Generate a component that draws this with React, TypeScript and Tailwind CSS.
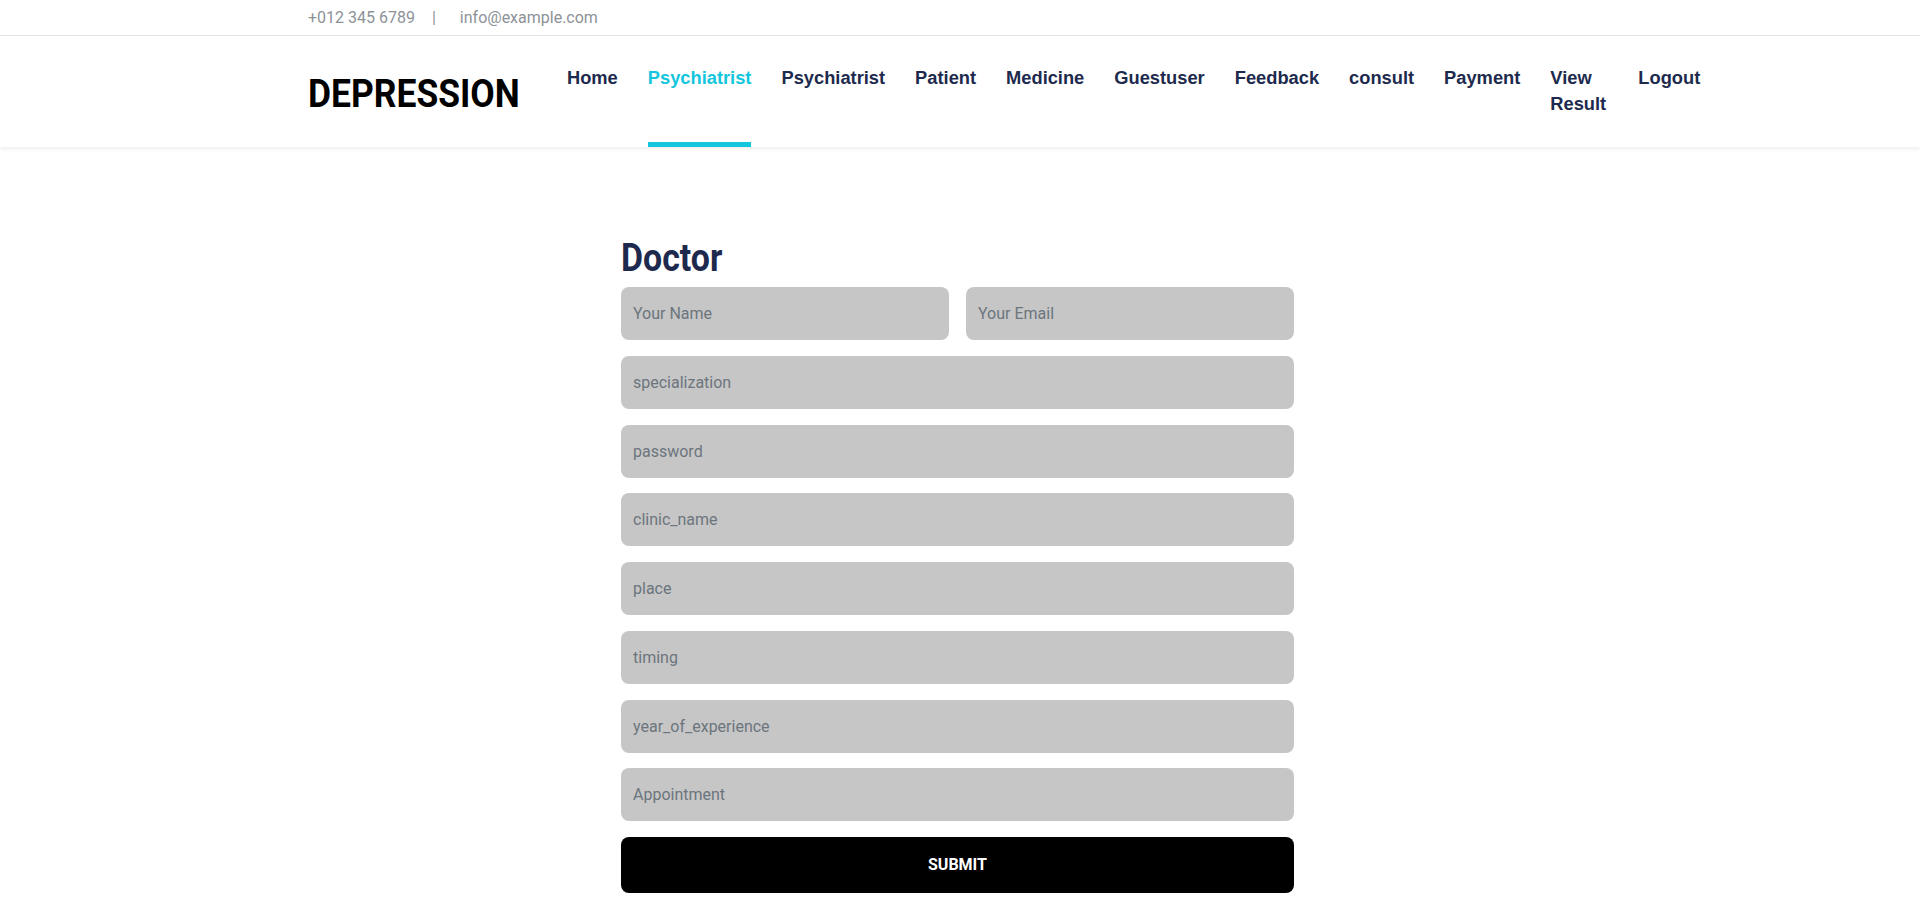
import React from 'react';

const navItems = [
  { label: 'Home' },
  { label: 'Psychiatrist', active: true },
  { label: 'Psychiatrist' },
  { label: 'Patient' },
  { label: 'Medicine' },
  { label: 'Guestuser' },
  { label: 'Feedback' },
  { label: 'consult' },
  { label: 'Payment' },
  { label: 'View Result', narrow: true },
  { label: 'Logout' },
];

const fields = [
  'specialization',
  'password',
  'clinic_name',
  'place',
  'timing',
  'year_of_experience',
  'Appointment',
];

const inputCls =
  "w-full h-[53px] rounded-lg bg-[#c6c6c6] pl-3 text-[16px] text-[#1d2a4d] placeholder:text-[#6c757d] outline-none font-['Roboto',sans-serif]";

const TopBar: React.FC = () => (
  <div className="h-[36px] border-b border-[#e3e6ec]">
    <div className="mx-auto w-[1320px] px-[8px] h-full flex items-center text-[16px] text-[#8d9297] font-['Roboto',sans-serif]">
      <span>+012 345 6789</span>
      <span className="ml-[17px]">|</span>
      <span className="ml-[24px]">info@example.com</span>
    </div>
  </div>
);

const NavBar: React.FC = () => (
  <div className="h-[111px] bg-white shadow-[0_2px_4px_rgba(0,0,0,0.07)] relative">
    <div className="mx-auto w-[1320px] px-[8px] h-full flex items-stretch">
      <div className="w-[244px] shrink-0 pt-[39px]">
        <span className="inline-block origin-left scale-x-[0.92] text-[38.5px] leading-[38.5px] font-bold text-black font-['Roboto',sans-serif]">
          DEPRESSION
        </span>
      </div>
      <nav className="flex items-stretch">
        {navItems.map((item, i) => (
          <a
            key={i}
            href="#"
            className={`mx-[15px] pt-[29px] border-b-[5px] text-[18.3px] leading-[26px] font-bold font-['Liberation_Sans',Arial,sans-serif] ${
              item.active ? 'border-[#13c5dd] text-[#13c5dd]' : 'border-transparent text-[#1d2a4d]'
            } ${item.narrow ? 'w-[58px]' : 'whitespace-nowrap'}`}
          >
            {item.label}
          </a>
        ))}
      </nav>
    </div>
  </div>
);

const DoctorForm: React.FC = () => (
  <div className="pt-[87px] pb-6 pr-[5px] flex justify-center">
    <form className="w-[673px] flex flex-col gap-[15.75px]" onSubmit={(e) => e.preventDefault()}>
      <h1 className="-mb-[10.6px] text-[38.5px] leading-[48px] font-bold text-[#1d2a4d] font-['Roboto',sans-serif]">
        <span className="inline-block origin-left scale-x-[0.88]">Doctor</span>
      </h1>
      <div className="grid grid-cols-2 gap-[17px]">
        <input className={inputCls} placeholder="Your Name" />
        <input className={inputCls} placeholder="Your Email" />
      </div>
      {fields.map((f) => (
        <input key={f} className={inputCls} placeholder={f} />
      ))}
      <button
        type="submit"
        className="h-[56px] w-full rounded-lg bg-black text-white text-[16px] font-bold uppercase font-['Roboto',sans-serif]"
      >
        Submit
      </button>
    </form>
  </div>
);

export default function App() {
  return (
    <div className="min-h-screen bg-white">
      <TopBar />
      <NavBar />
      <DoctorForm />
    </div>
  );
}
